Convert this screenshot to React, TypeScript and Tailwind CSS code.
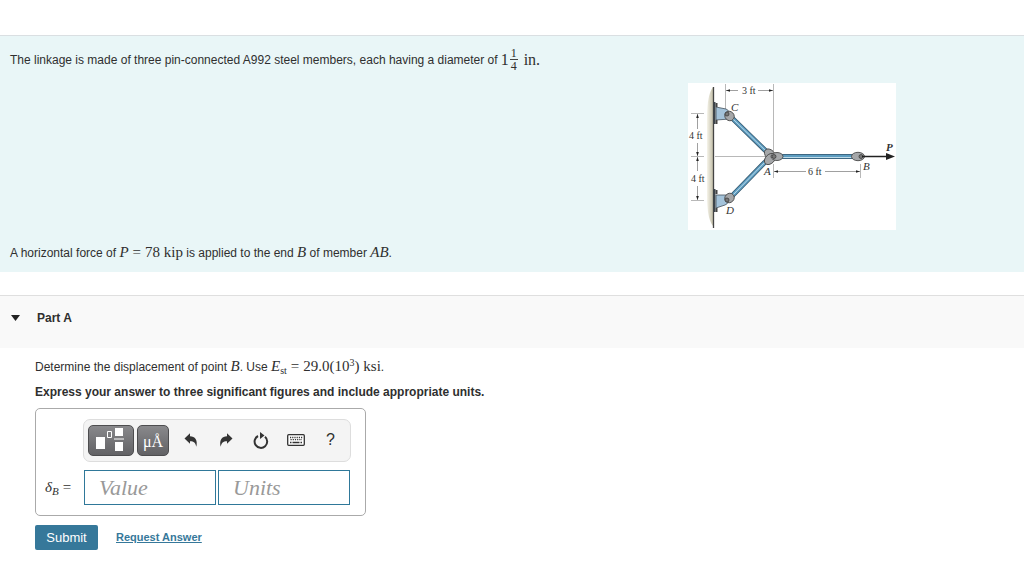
import { useState } from "react";
import type { ReactNode } from "react";

const SANS = "font-['Liberation_Sans',Arial,sans-serif]";
const SERIF = "font-['Liberation_Serif','Times_New_Roman',serif]";

function MathText({ children }: { children: ReactNode }) {
  return <span className={`${SERIF} text-[15px] whitespace-nowrap`}>{children}</span>;
}

function Equals() {
  return <span className="mx-1">=</span>;
}

function LinkageFigure() {
  return (
    <svg
      viewBox="0 0 208 147"
      className="w-[208px] shrink-0 bg-white"
      role="img"
      aria-label="Linkage with pins A, B, C and D"
    >
      <defs>
        <linearGradient id="wall" x1="0" x2="1" y1="0" y2="0">
          <stop offset="0" stopColor="#f6f4ea" />
          <stop offset="1" stopColor="#c3bfa9" />
        </linearGradient>
        <marker id="tip" viewBox="0 0 6 4" refX="6" refY="2" markerWidth="4" markerHeight="3" markerUnits="userSpaceOnUse" orient="auto-start-reverse">
          <path d="M0 0 L6 2 L0 4 Z" fill="#222" />
        </marker>
      </defs>

      {/* wall */}
      <path d="M25 4 Q19 12 19 35 V112 Q19 136 25 143 Z" fill="url(#wall)" />
      <path d="M25.500 4 V145" stroke="#444" strokeWidth="1.300" />

      {/* guide lines */}
      <g stroke="#999" strokeWidth=".7">
        <path d="M37.500 1 V29" />
        <path d="M85.500 1 V68" />
        <path d="M27 73.500 H80" />
        <path d="M3 30.500 H16" />
        <path d="M3 73.500 H16" />
        <path d="M3 117.500 H16" />
        <path d="M85.500 81 V95" />
        <path d="M172.500 81 V95" />
      </g>

      {/* dimensions */}
      <g stroke="#777" strokeWidth=".7">
        <path d="M50 7.500 H38" markerEnd="url(#tip)" />
        <path d="M70 7.500 H85" markerEnd="url(#tip)" />
        <path d="M9.500 46 V31" markerEnd="url(#tip)" />
        <path d="M9.500 60 V73" markerEnd="url(#tip)" />
        <path d="M9.500 88 V74" markerEnd="url(#tip)" />
        <path d="M9.500 103 V117" markerEnd="url(#tip)" />
        <path d="M118 88.500 H86" markerEnd="url(#tip)" />
        <path d="M137 88.500 H172" markerEnd="url(#tip)" />
      </g>

      {/* supports */}
      <g>
        <path d="M26.500 19 V41" stroke="#3c454c" strokeWidth="2" />
        <path d="M28 24 L38 26 Q43 28 42 36 L28 37 Z" fill="#a4c3da" stroke="#44515c" strokeWidth=".8" />
        <path d="M28.500 20 V24 M28.500 37 V41" stroke="#444" strokeWidth="2" />
      </g>
      <g>
        <path d="M26.500 106 V129" stroke="#3c454c" strokeWidth="2" />
        <path d="M28 112 L42 112 Q42 120 37 122 L28 125 Z" fill="#a4c3da" stroke="#44515c" strokeWidth=".8" />
        <path d="M28.500 107 V111 M28.500 125 V129" stroke="#444" strokeWidth="2" />
      </g>

      {/* members */}
      <g fill="none">
        <path d="M43 34 L83 73 L43 114 M88 73.500 H166" stroke="#34566c" strokeWidth="5" />
        <path d="M43 34 L83 73 L43 114 M88 73.500 H166" stroke="#5d9dc1" strokeWidth="3.500" />
        <path d="M43 34 L83 73 L43 114 M88 74.500 H166" stroke="#bfdcea" strokeWidth="1" />
      </g>

      {/* pins */}
      <g fill="#a5a7a9" stroke="#4b4b4b" strokeWidth=".9">
        <ellipse cx="41.500" cy="33" rx="5" ry="4.500" transform="rotate(45 41.500 33)" />
        <ellipse cx="41.500" cy="115" rx="5" ry="4.500" transform="rotate(-45 41.500 115)" />
        <ellipse cx="82" cy="71.500" rx="6.500" ry="4.500" transform="rotate(45 82 71.500)" />
        <ellipse cx="82" cy="76" rx="6.500" ry="4.500" transform="rotate(-45 82 76)" />
        <ellipse cx="89" cy="73.500" rx="6" ry="4" />
        <ellipse cx="170" cy="73.500" rx="6.500" ry="4.200" />
      </g>
      <g fill="#777" stroke="#333" strokeWidth=".7">
        <circle cx="39" cy="31" r="2" />
        <circle cx="39" cy="117" r="2" />
        <circle cx="86" cy="73.500" r="2" />
        <circle cx="173" cy="73.500" r="2" />
      </g>

      {/* load */}
      <path d="M174 73.500 H200" stroke="#222" strokeWidth="1.500" />
      <path d="M198 70 L207 73.500 L198 77 Z" fill="#222" />

      <g className={SERIF} fill="#333" fontSize="10">
        <text x="54" y="11">3 ft</text>
        <text x="1" y="56">4 ft</text>
        <text x="3" y="99">4 ft</text>
        <text x="120" y="92">6 ft</text>
        <g fontStyle="italic" fontSize="11">
          <text x="43" y="28">C</text>
          <text x="76" y="92">A</text>
          <text x="175" y="87">B</text>
          <text x="38" y="131">D</text>
          <text x="198" y="68" fontWeight="bold">P</text>
        </g>
      </g>
    </svg>
  );
}

function UndoIcon({ flip = false }: { flip?: boolean }) {
  return (
    <svg viewBox="0 0 14 14" className={flip ? "h-[14px] w-[14px] -scale-x-100" : "h-[14px] w-[14px]"} fill="#333">
      <path d="M0.500 5.500 L6 0.300 V3.200 C11 3.300 14 7 12.300 13.800 C11.500 10 10 8.300 6 8.300 V10.800 Z" />
    </svg>
  );
}

function ResetIcon() {
  return (
    <svg viewBox="0 0 16 17" className="h-[17px] w-4">
      <path d="M5 4 A6.300 6.300 0 1 0 12 4.800" fill="none" stroke="#333" strokeWidth="2" />
      <path d="M7 0 L11.500 3.500 L7 7 Z" fill="#333" />
    </svg>
  );
}

function KeyboardIcon() {
  return (
    <svg viewBox="0 0 18 12" className="h-3 w-[18px]">
      <rect x=".7" y=".7" width="16.600" height="10.600" rx="1" fill="#fff" stroke="#333" strokeWidth="1.300" />
      <path d="M3 3.500 H15.500 M3.500 5.700 H15" stroke="#333" strokeWidth="1.300" strokeDasharray="1.200 1" />
      <path d="M3 8.500 H4.500 M5.500 8.500 H12.500 M13.500 8.500 H15" stroke="#333" strokeWidth="1.300" />
    </svg>
  );
}

const darkButton =
  "flex h-[31px] items-center justify-center rounded-[5px] border border-[#4d4d4f] bg-linear-to-b from-[#89898c] to-[#626265] text-white";
const iconButton = "flex h-8 w-[35px] items-center justify-center";
const field =
  `${SERIF} h-[35px] w-[132px] border border-[#2f7899] bg-white px-[14px] text-[22px] italic text-[#333] outline-none placeholder:text-[#999]`;

export default function App() {
  const [open, setOpen] = useState(true);
  const [value, setValue] = useState("");
  const [units, setUnits] = useState("");

  return (
    <main className={`${SANS} bg-white pt-[35px] text-[12px] text-[#2f2f2f]`}>
      <section className="border-t border-[#dadfe2] bg-[#e9f6f7] px-[10px] pb-[10px]">
        <p className="flex h-[47px] items-center">
          The linkage is made of three pin-connected A992 steel members, each having a diameter of
          <span className={`${SERIF} ml-[3px] flex items-center text-[16px]`}>
            1
            <span className="ml-px flex flex-col text-center text-[12px] leading-[12px]">
              <span className="border-b border-[#444] px-px">1</span>
              <span>4</span>
            </span>
            <span className="ml-[6px]">in.</span>
          </span>
        </p>
        <div className="flex justify-end pr-[118px]">
          <LinkageFigure />
        </div>
        <p className="mt-3 h-5 leading-5">
          A horizontal force of <MathText><i>P</i><Equals />78 kip</MathText> is applied to the end{" "}
          <MathText><i>B</i></MathText> of member <MathText><i>AB</i></MathText>.
        </p>
      </section>

      <section>
        <h2 className="mt-[23px] border-t border-[#dfdfdf] bg-[#f9f9f9]">
          <button
            onClick={() => setOpen(!open)}
            aria-expanded={open}
            className="flex h-[52px] w-full items-center px-[11px] pb-2 text-left font-bold"
          >
            <svg viewBox="0 0 9 6" className="mr-[17px] h-[6px] w-[9px]" fill="#222">
              <path d="M0 0 H9 L4.500 6 Z" />
            </svg>
            Part A
          </button>
        </h2>

        {open && (
          <div className="px-[35px] pt-2">
            <p className="h-5 leading-5">
              Determine the displacement of point <MathText><i>B</i></MathText>. Use{" "}
              <MathText>
                <i>E</i>
                <sub className="text-[10px]">st</sub>
                <Equals />
                29.0(10<sup className="text-[10px]">3</sup>) ksi
              </MathText>
              .
            </p>
            <p className="mt-[6px] h-5 font-bold leading-5">
              Express your answer to three significant figures and include appropriate units.
            </p>

            {/* answer box */}
            <form onSubmit={(e) => e.preventDefault()}>
              <div className="mt-[6px] flex w-fit flex-col rounded-[5px] border border-[#aaa] pt-[10px] pr-[14px] pb-[10px] pl-[9px]">
                <div className="ml-[38px] flex h-[43px] w-[268px] items-center rounded-[7px] border border-[#ddd] bg-[#f4f4f4] pb-px pl-1">
                  <button type="button" aria-label="Templates" className={`${darkButton} w-[46px] pr-[2px]`}>
                    <svg viewBox="0 0 30 26" className="h-[26px] w-[30px]">
                      <path d="M1 10 H10 V22 H1 Z M20 1 H28 V9 H20 Z M20 15 H28 V24 H20 Z" fill="#fff" />
                      <path d="M12.500 4.500 H16.500 V10.500 H12.500 Z M19 12 H29" fill="none" stroke="#fff" />
                    </svg>
                  </button>
                  <button type="button" aria-label="Symbols" className={`${darkButton} ${SERIF} ml-[3px] w-8 pt-[3px] text-[16px]`}>
                    μÅ
                  </button>
                  <div className="ml-1 flex">
                    <button type="button" aria-label="Undo" className={iconButton}><UndoIcon /></button>
                    <button type="button" aria-label="Redo" className={iconButton}><UndoIcon flip /></button>
                    <button type="button" aria-label="Reset" className={iconButton}><ResetIcon /></button>
                    <button type="button" aria-label="Keyboard" className={iconButton}><KeyboardIcon /></button>
                    <button type="button" aria-label="Help" className={`${iconButton} text-[16px]`}>?</button>
                  </div>
                </div>
                <div className="mt-2 flex items-center">
                  <label htmlFor="value" className={`${SERIF} w-[39px] text-[15px] whitespace-nowrap`}>
                    <i>δ</i>
                    <sub className="text-[11px] italic">B</sub>
                    <Equals />
                  </label>
                  <input
                    id="value"
                    className={field}
                    placeholder="Value"
                    value={value}
                    onChange={(e) => setValue(e.target.value)}
                  />
                  <input
                    aria-label="Units"
                    className={`${field} ml-[2px]`}
                    placeholder="Units"
                    value={units}
                    onChange={(e) => setUnits(e.target.value)}
                  />
                </div>
              </div>

              <div className="mt-[9px] flex items-center">
                <button type="submit" className="h-[25px] w-[63px] rounded-[2px] bg-[#36789a] text-[13px] text-white">
                  Submit
                </button>
                <a href="#" className="ml-[18px] text-[11px] font-bold text-[#36789a] underline">
                  Request Answer
                </a>
              </div>
            </form>
          </div>
        )}
      </section>
    </main>
  );
}
